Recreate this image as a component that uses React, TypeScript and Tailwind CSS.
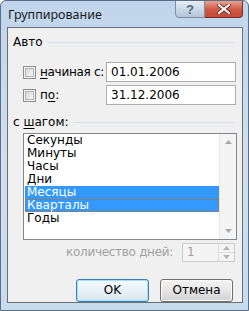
const font = { fontFamily: '"DejaVu Sans", "Liberation Sans", sans-serif' };

const Checkbox = () => (
  <div className="w-[13px] h-[13px] border border-[#8e8f8f] bg-[#f4f4f4] p-[1px] shrink-0">
    <div className="w-full h-full border border-[#b3b3b3] bg-gradient-to-br from-[#d6d6d6] to-[#f8f8f8]" />
  </div>
);

const Arrow = ({ up, color = "#a9a9a9" }: { up?: boolean; color?: string }) => (
  <svg width="7" height="4" viewBox="0 0 7 4">
    <path d={up ? "M0 4 L3.5 0 L7 4 Z" : "M0 0 L3.5 4 L7 0 Z"} fill={color} />
  </svg>
);

const items = ["Секунды", "Минуты", "Часы", "Дни", "Месяцы", "Кварталы", "Годы"];

export default function App() {
  return (
    <div
      className="w-[249px] h-[311px] flex flex-col border border-[#5a6e86] rounded-t-[6px] bg-gradient-to-b from-[#c0d5eb] via-[#cfdff0] to-[#c7dbef] text-[12px] leading-[13px] text-black overflow-hidden"
      style={font}
    >
      {/* title bar */}
      <div className="h-[26px] flex shrink-0">
        <div
          className="pl-[7px] pt-[7px] text-[12.5px] text-[#1a1a1a]"
          style={{ fontFamily: '"Noto Sans", "DejaVu Sans", sans-serif' }}
        >
          Группирование
        </div>
        <div className="ml-auto mr-[5px] flex h-[18px] -mt-px">
          <div className="w-[30px] h-full border border-[#7d8ea2] rounded-bl-[4px] bg-gradient-to-b from-[#e6eef6] via-[#ccd9e7] to-[#b4c6da] flex items-center justify-center">
            <span className="text-[13px] font-bold text-[#55657a]" style={{ fontFamily: '"Liberation Sans", sans-serif' }}>
              ?
            </span>
          </div>
          <div className="w-[38px] h-full border border-[#7a2b22] border-l-0 rounded-br-[4px] bg-gradient-to-b from-[#e8a493] via-[#cf5a45] to-[#c44a34] flex items-center justify-center">
            <svg width="14" height="10" viewBox="0 0 14 10">
              <path d="M2 1 L12 9 M12 1 L2 9" stroke="#5c1a12" strokeWidth="3.6" strokeLinecap="square" />
              <path d="M2 1 L12 9 M12 1 L2 9" stroke="#ffffff" strokeWidth="2.2" strokeLinecap="square" />
            </svg>
          </div>
        </div>
      </div>

      {/* client area */}
      <div className="ml-[6px] mr-[5px] h-[276px] border border-[#6b7076] bg-[#f0f0f0] flex flex-col pt-[8px]">
        <div className="flex items-center pl-[5px] pr-[7px] h-[13px]">
          <span>Авто</span>
          <div className="flex-1 h-px bg-[#d5dfe5] ml-[4px]" />
        </div>

        <div className="mt-[13px] flex flex-col gap-[3px] pl-[15px] pr-[6px]">
          <div className="flex items-center h-[20px]">
            <div className="w-[83px] flex items-center gap-[4px] whitespace-nowrap">
              <Checkbox />
              <span className="tracking-[-0.3px]">
                <span className="underline underline-offset-2">н</span>ачиная с:
              </span>
            </div>
            <div className="w-[130px] h-[20px] border border-[#abadb3] bg-white flex items-center pl-[4px]">01.01.2006</div>
          </div>
          <div className="flex items-center h-[20px]">
            <div className="w-[83px] flex items-center gap-[4px] whitespace-nowrap">
              <Checkbox />
              <span>
                п<span className="underline underline-offset-2">о</span>:
              </span>
            </div>
            <div className="w-[130px] h-[20px] border border-[#abadb3] bg-white flex items-center pl-[4px]">31.12.2006</div>
          </div>
        </div>

        <div className="mt-[11px] flex items-center pl-[5px] pr-[7px] h-[13px]">
          <span className="whitespace-nowrap">
            с <span className="underline underline-offset-2">ш</span>агом:
          </span>
          <div className="flex-1 h-px bg-[#d5dfe5] ml-[4px]" />
        </div>

        <div className="mt-[4px] ml-[15px] w-[214px] h-[108px] border border-[#828790] bg-white flex">
          <div className="flex-1 flex flex-col pl-px pt-0">
            {items.map((it, i) => {
              const sel = i === 4 || i === 5;
              return (
                <div
                  key={it}
                  className={
                    "h-[13px] pl-[2px] " +
                    (sel ? "bg-[#3399ff] text-white " : "") +
                    (i === 5 ? "outline-1 outline-dotted outline-[#cc6600] -outline-offset-1" : "")
                  }
                >
                  {it}
                </div>
              );
            })}
          </div>
          <div className="w-[17px] bg-[#f4f4f4] border-l border-[#e8e8e8] flex flex-col justify-between items-center py-[6px]">
            <Arrow up />
            <Arrow />
          </div>
        </div>

        <div className="mt-[3px] flex items-center justify-end pr-[7px] h-[19px]">
          <span className="text-[#a0a0a0] mr-[9px] whitespace-nowrap tracking-[-0.3px]">количество дней:</span>
          <div className="w-[53px] h-[19px] border border-[#c9cdd2] bg-[#f4f4f4] flex">
            <div className="flex-1 pl-[4px] flex items-center text-[#a0a0a0]">1</div>
            <div className="w-[16px] flex flex-col border-l border-[#dcdcdc]">
              <div className="flex-1 flex items-center justify-center border-b border-[#dcdcdc]">
                <Arrow up color="#b5b5b5" />
              </div>
              <div className="flex-1 flex items-center justify-center">
                <Arrow color="#b5b5b5" />
              </div>
            </div>
          </div>
        </div>

        <div className="mt-[17px] flex justify-end gap-[11px] pr-[9px]">
          <div className="w-[73px] h-[23px] rounded-[3px] border border-[#3c7fb1] bg-gradient-to-b from-[#f5fafd] via-[#e9f2f9] to-[#d7e4ee] shadow-[inset_0_0_0_1px_#a8def7] flex items-center justify-center">
            OK
          </div>
          <div className="w-[73px] h-[23px] rounded-[3px] border border-[#707070] bg-gradient-to-b from-[#f2f2f2] via-[#e6e6e6] to-[#d2d2d2] shadow-[inset_0_0_0_1px_#fcfcfc] flex items-center justify-center">
            Отмена
          </div>
        </div>
      </div>
    </div>
  );
}
